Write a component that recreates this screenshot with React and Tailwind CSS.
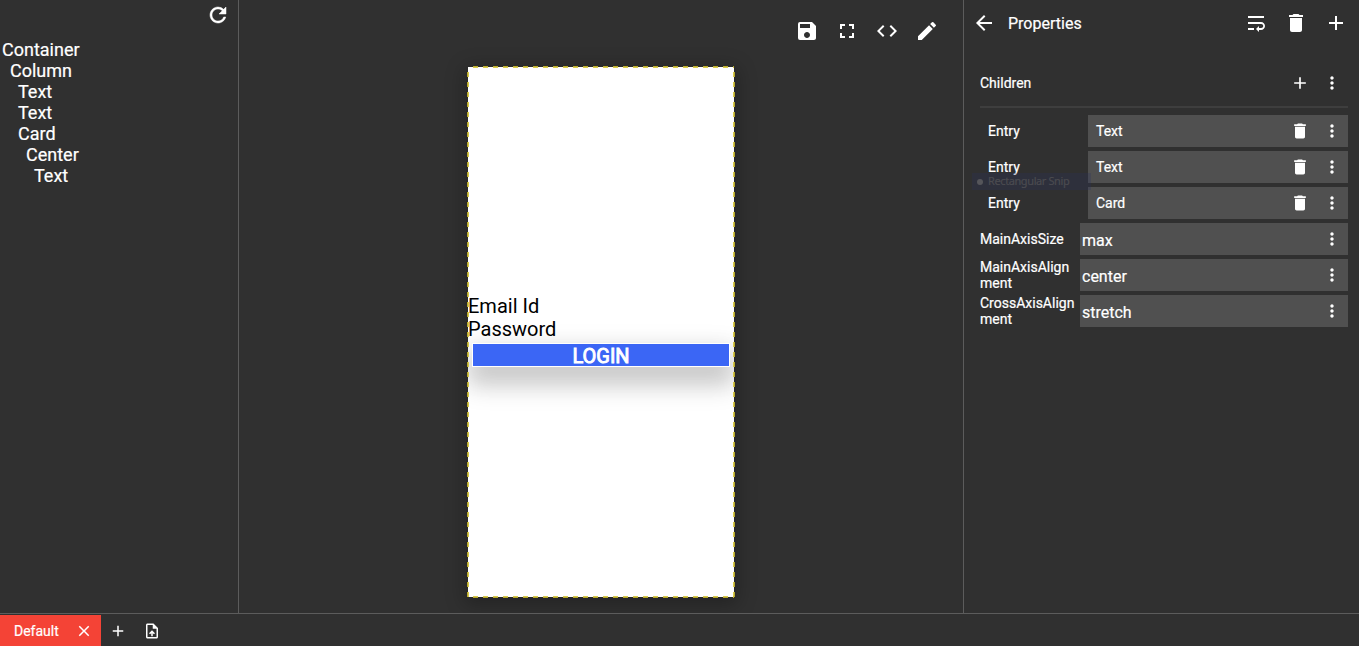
import {
  MdAdd, MdArrowBack, MdClose, MdCode, MdDelete, MdEdit, MdFullscreen,
  MdMoreVert, MdOutlineUploadFile, MdSave, MdWrapText,
} from "react-icons/md";

const tree = [
  { name: "Container", pad: "pl-[2px]" },
  { name: "Column", pad: "pl-[10px]" },
  { name: "Text", pad: "pl-[18px]" },
  { name: "Text", pad: "pl-[18px]" },
  { name: "Card", pad: "pl-[18px]" },
  { name: "Center", pad: "pl-[26px]" },
  { name: "Text", pad: "pl-[34px]" },
];

const entries = ["Text", "Text", "Card"];

const settings = [
  { label: ["MainAxisSize"], value: "max" },
  { label: ["MainAxisAlign", "ment"], value: "center" },
  { label: ["CrossAxisAlign", "ment"], value: "stretch" },
];

function TreePanel() {
  return (
    <aside className="w-[239px] shrink-0 border-r border-[#5c5c5c]">
      <div className="flex h-[39px] justify-end pt-[3px] pr-2">
        <svg width="24" height="24" viewBox="0 0 24 24" fill="currentColor" stroke="currentColor" strokeWidth="0.5">
          <path d="M17.65 6.35A7.958 7.958 0 0 0 12 4c-4.42 0-7.99 3.58-7.99 8s3.57 8 7.99 8c3.73 0 6.84-2.55 7.73-6h-2.08A5.99 5.99 0 0 1 12 18c-3.31 0-6-2.69-6-6s2.69-6 6-6c1.66 0 3.14.69 4.22 1.78L13 11h7V4l-2.35 2.35z" />
        </svg>
      </div>
      <ul className="text-[18px] leading-[21px]">
        {tree.map((n, i) => <li key={i} className={n.pad}>{n.name}</li>)}
      </ul>
    </aside>
  );
}

function Device() {
  return (
    <div className="relative h-[530px] w-[266px] bg-white text-black shadow-[0_4px_18px_3px_rgba(0,0,0,0.28)] [-webkit-text-stroke:0px]">
      <div className="flex h-full flex-col justify-center overflow-hidden">
        <div className="pt-px text-[20px] leading-[23px]">Email Id</div>
        <div className="text-[20px] leading-[23px]">Password</div>
        <div className="mx-1 mt-[2px] mb-1 h-6 border border-white bg-[#3b66f5] pt-px text-center text-[20px] leading-[23px] text-white shadow-[0_16px_24px_4px_rgba(0,0,0,0.17),0_6px_24px_5px_rgba(0,0,0,0.08)] [-webkit-text-stroke:0.9px_white]">
          LOGIN
        </div>
      </div>
      <svg className="absolute -top-px -left-px" width="268" height="532" fill="none" stroke="#d0c030" strokeOpacity="0.85" strokeWidth="2" strokeDasharray="5 5" strokeDashoffset="5">
        <path d="M1 1H267" />
        <path d="M1 1V531" />
        <path d="M267 1V531" />
        <path d="M1 531H267" />
      </svg>
    </div>
  );
}

function Canvas() {
  return (
    <main className="flex min-w-0 flex-1 flex-col overflow-hidden">
      <div className="flex h-[67px] shrink-0 justify-end gap-4 pt-[19px] pr-6">
        <MdSave size={24} />
        <MdFullscreen size={24} />
        <MdCode size={24} />
        <MdEdit size={24} />
      </div>
      <div className="flex pl-[229px]"><Device /></div>
    </main>
  );
}

function Properties() {
  return (
    <aside className="relative w-[396px] shrink-0 border-l border-[#5c5c5c] text-[14px]">
      <header className="flex h-[46px] items-center pr-[11px] pl-2">
        <MdArrowBack size={24} />
        <h2 className="ml-3 flex-1 pt-px text-[16px]">Properties</h2>
        <div className="flex gap-4">
          <MdWrapText size={24} />
          <MdDelete size={24} />
          <MdAdd size={24} />
        </div>
      </header>
      <div className="mt-[21px] mr-[11px] ml-4">
        <div className="flex h-8 items-center gap-3 pr-1.5">
          <span className="flex-1">Children</span>
          <MdAdd size={20} />
          <MdMoreVert size={20} />
        </div>
        <div className="mt-[7px] mb-[7px] h-[2px] bg-[#3e3e3e]" />
        <div className="flex flex-col gap-1">
          {entries.map((e, i) => (
            <div key={i} className="flex h-8 items-center pl-2">
              <span className="w-[100px]">Entry</span>
              <div className="flex h-8 flex-1 items-center gap-3 bg-[#505050] pr-1.5 pl-2">
                <span className="flex-1">{e}</span>
                <MdDelete size={20} />
                <MdMoreVert size={20} />
              </div>
            </div>
          ))}
          {settings.map((s) => (
            <div key={s.value} className="flex h-8 items-center">
              <div className="w-[100px] leading-4">
                {s.label.map((l) => <div key={l}>{l}</div>)}
              </div>
              <div className="flex h-8 flex-1 items-center bg-[#505050] pr-1.5 pl-[2px]">
                <span className="flex-1 pt-[3px] text-[16px]">{s.value}</span>
                <MdMoreVert size={20} />
              </div>
            </div>
          ))}
        </div>
      </div>
      <div className="absolute top-[173px] left-2 flex h-[17px] w-[119px] items-center bg-[#273060]/25 pl-[5px] font-['Noto_Sans',sans-serif] text-[11px] tracking-[-0.4px] whitespace-nowrap text-[#4b4b50]">
        <span className="mr-[5px] size-1.5 rounded-full bg-[#55555a]" />
        Rectangular Snip
      </div>
    </aside>
  );
}

function TabBar() {
  return (
    <footer className="flex h-[33px] border-t border-[#5c5c5c] pt-px text-[14px]">
      <div className="flex w-[101px] items-center bg-[#f44336] pl-[14px]">
        <span className="w-[61px] pt-px">Default</span>
        <MdClose size={18} />
      </div>
      <div className="flex items-center gap-4 pl-2">
        <MdAdd size={18} />
        <MdOutlineUploadFile size={18} />
      </div>
    </footer>
  );
}

export default function App() {
  return (
    <div className="flex h-[646px] w-[1359px] flex-col overflow-hidden bg-[#303030] font-[Roboto,sans-serif] text-white [-webkit-text-stroke:0.2px]">
      <div className="flex h-[613px]">
        <TreePanel />
        <Canvas />
        <Properties />
      </div>
      <TabBar />
    </div>
  );
}
